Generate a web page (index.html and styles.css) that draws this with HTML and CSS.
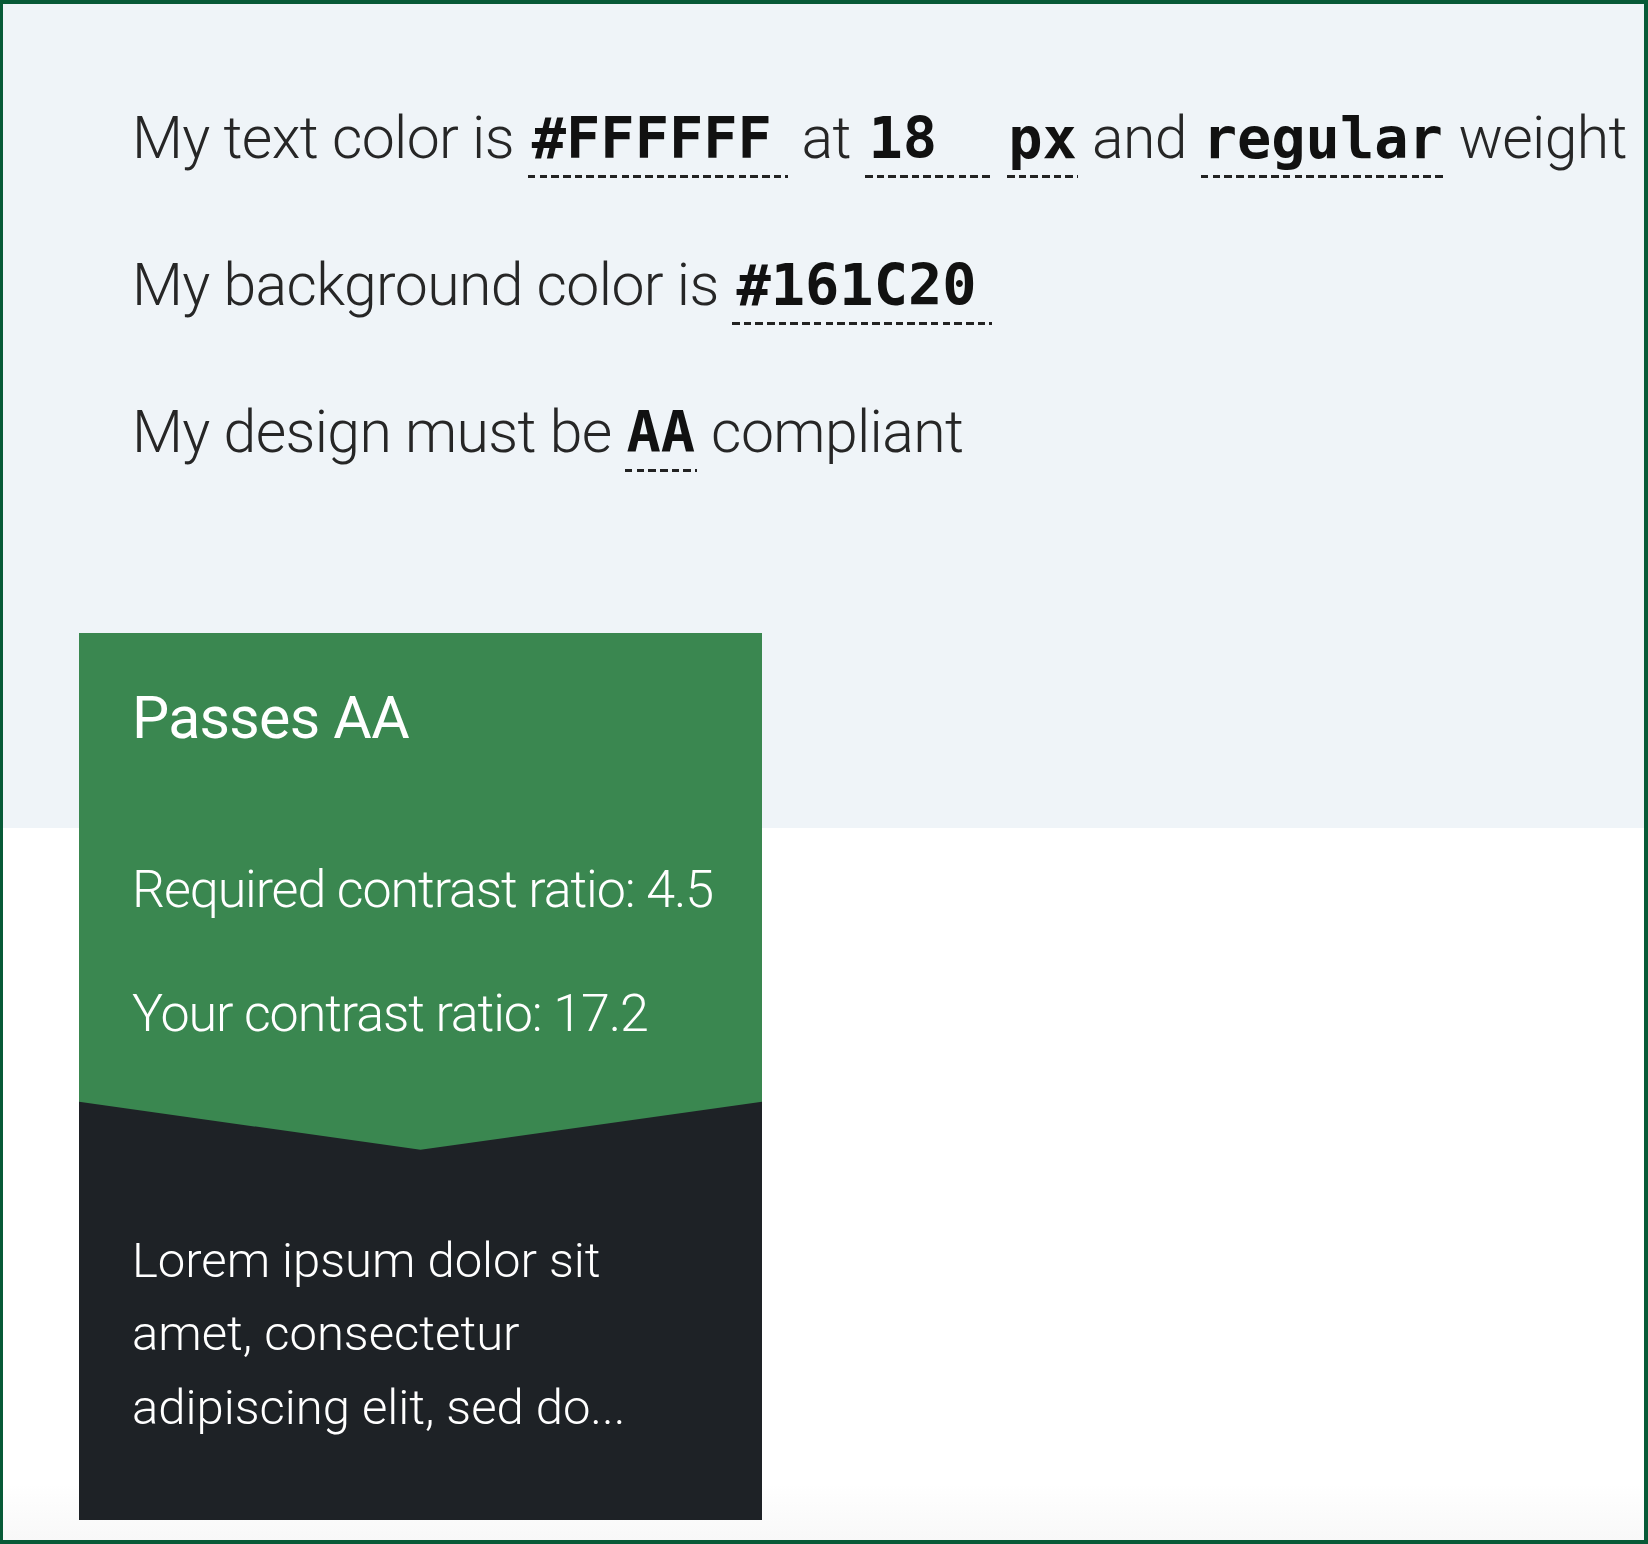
FILE: index.html
```html
<!DOCTYPE html>
<html lang="en">
<head>
<meta charset="utf-8">
<title>Contrast checker</title>
<link rel="stylesheet" href="styles.css">
</head>
<body>
<div class="frame">
  <section class="intro">
    <p class="sentence">My text color is <span class="field field-hex">#FFFFFF</span> at <span class="field field-num">18</span> <span class="field field-unit">px</span> and <span class="field field-weight">regular</span> weight</p>
    <p class="sentence">My background color is <span class="field field-hex2">#161C20</span></p>
    <p class="sentence">My design must be <span class="field field-level">AA</span> compliant</p>
  </section>
  <article class="card">
    <div class="card-result">
      <h2 class="card-title">Passes AA</h2>
      <p class="card-stat">Required contrast ratio: 4.5</p>
      <p class="card-stat">Your contrast ratio: 17.2</p>
    </div>
    <div class="card-sample">
      <p>Lorem ipsum dolor sit amet, consectetur adipiscing elit, sed do...</p>
    </div>
  </article>
</div>
</body>
</html>
```

FILE: styles.css
```css
* { box-sizing: border-box; }

html, body {
  margin: 0;
  padding: 0;
}

body {
  font-family: Roboto, "Liberation Sans", sans-serif;
  background: #ffffff;
}

.frame {
  width: 1648px;
  height: 1544px;
  border: 4px solid #075a37;
  border-left-width: 3px;
  overflow: hidden;
  background: linear-gradient(to bottom, #eff4f8 0, #eff4f8 824px, #ffffff 824px, #ffffff 1480px, #f8f8f8 1536px);
}

.intro {
  padding: 31px 0 0 129px;
}

.sentence {
  margin: 58.9px 0;
  font-size: 58.9px;
  line-height: 88.3px;
  font-weight: 300;
  letter-spacing: -0.6px;
  color: #262626;
  white-space: nowrap;
}

.field {
  display: inline-block;
  font-family: "DejaVu Sans Mono", "Liberation Mono", monospace;
  font-weight: 700;
  font-size: 57px;
  line-height: 70px;
  padding: 0 0 5px 4px;
  color: #111111;
  letter-spacing: 0;
  background-image: repeating-linear-gradient(to right, #222 0, #222 7.5px, transparent 7.5px, transparent 11.7px);
  background-size: 100% 3px;
  background-position: left bottom;
  background-repeat: no-repeat;
  vertical-align: baseline;
}

.field-hex { width: 260px; }
.field-num { width: 125px; margin-right: 4px; }
.field-unit { width: 71px; padding-left: 1px; }
.field-weight { width: 244px; padding-left: 2px; }
.field-hex2 { width: 260px; }
.field-level { width: 72px; padding-left: 1px; }

.card {
  width: 683px;
  margin: 156px 0 0 76px;
  background: #1e2226;
  color: #ffffff;
}

.card-result {
  background: #3a8750;
  padding: 50px 53px 103px;
  clip-path: polygon(0 0, 100% 0, 100% calc(100% - 48px), 50% 100%, 0 calc(100% - 48px));
}

.card-title {
  margin: 0 0 103px;
  font-size: 59px;
  line-height: 70.8px;
  font-weight: 400;
  letter-spacing: -0.7px;
}

.card-stat {
  margin: 0 0 56px;
  font-size: 52px;
  line-height: 67.2px;
  font-weight: 300;
  letter-spacing: -1.1px;
  white-space: nowrap;
}

.card-stat:last-child { margin-bottom: 0; }

.card-sample {
  padding: 74px 53px 75px;
}

.card-sample p {
  margin: 0;
  font-size: 49px;
  line-height: 73.6px;
  font-weight: 300;
}
```
